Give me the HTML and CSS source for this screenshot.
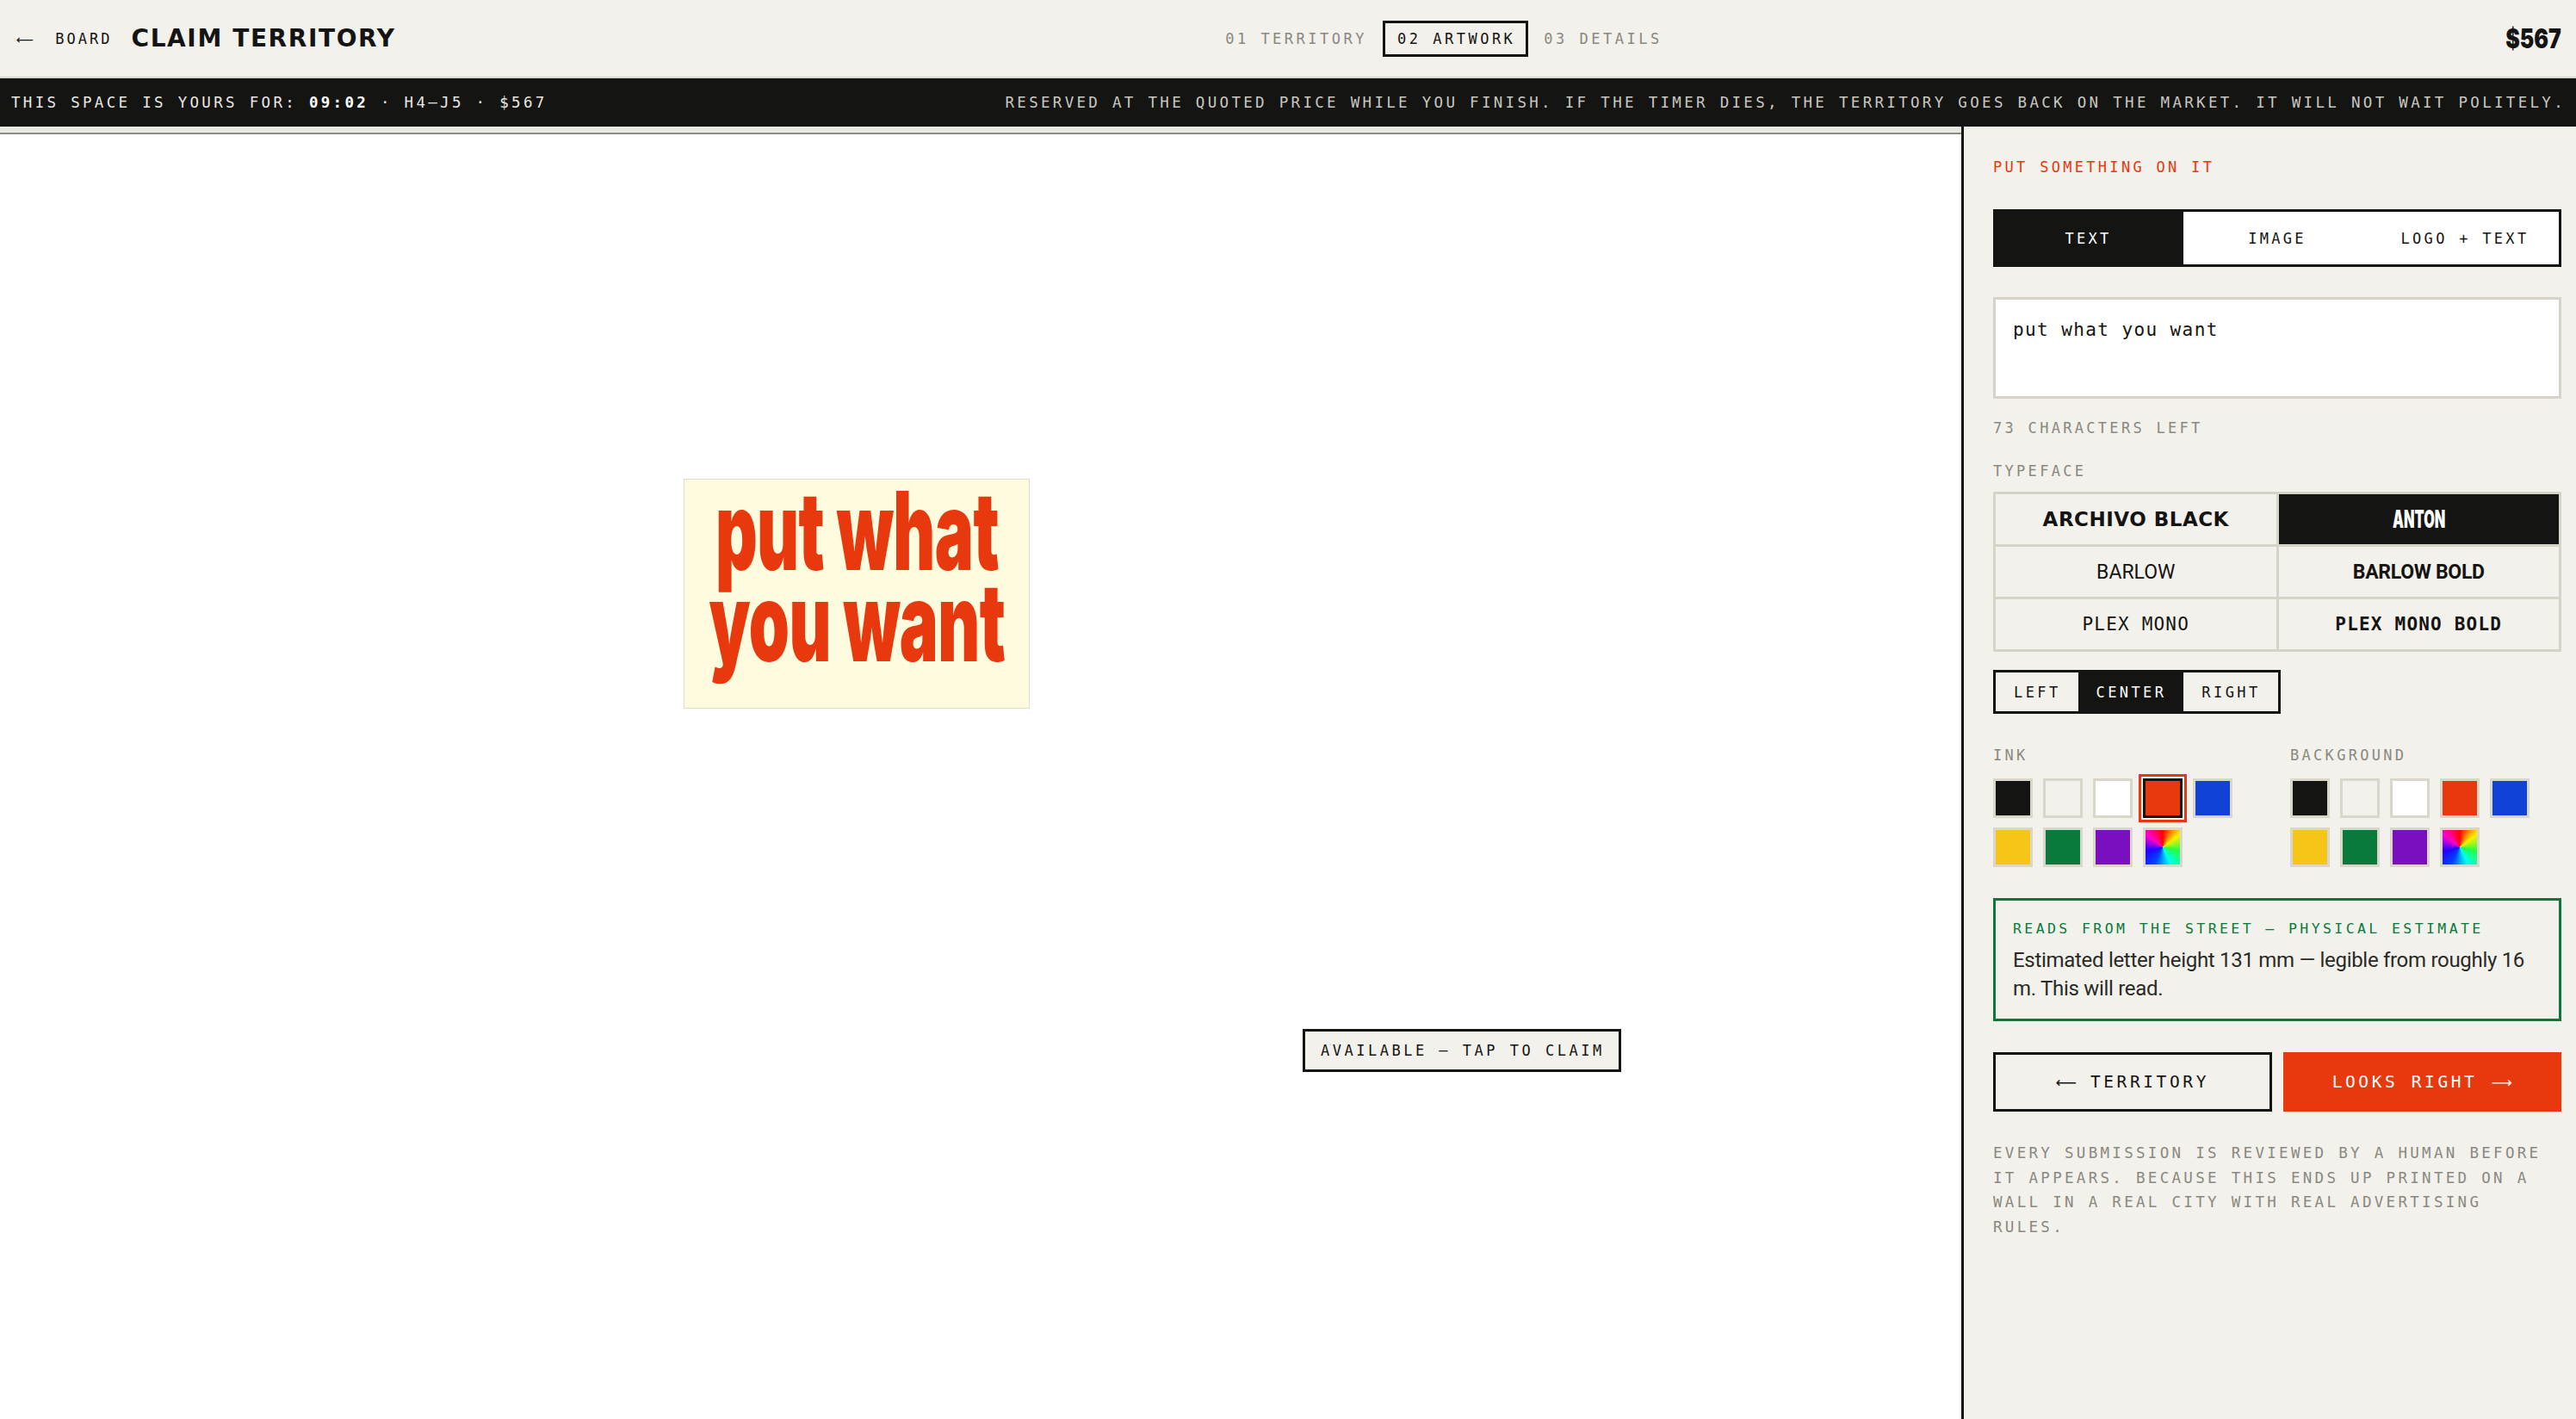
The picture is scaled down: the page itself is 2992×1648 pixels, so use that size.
FILE: index.html
```html
<!DOCTYPE html>
<html lang="en">
<head>
  <meta charset="UTF-8">
  <title>Claim territory</title>
  <link rel="stylesheet" href="styles.css">
</head>
<body>
  <!-- top bar -->
  <header class="top">
    <div class="top-left">
      <span class="back"><span class="arrow">⟵</span> BOARD</span>
      <h1 class="title">CLAIM TERRITORY</h1>
    </div>
    <nav class="steps">
      <span class="step">01 TERRITORY</span>
      <span class="step current">02 ARTWORK</span>
      <span class="step">03 DETAILS</span>
    </nav>
    <div class="price"><span>$567</span></div>
  </header>

  <!-- timer strip -->
  <div class="timer">
    <span>THIS SPACE IS YOURS FOR: <b>09:02</b> · H4–J5 · $567</span>
    <span>RESERVED AT THE QUOTED PRICE WHILE YOU FINISH. IF THE TIMER DIES, THE TERRITORY GOES BACK ON THE MARKET. IT WILL NOT WAIT POLITELY.</span>
  </div>

  <main class="main">
    <!-- wall preview -->
    <section class="canvas">
      <div class="ruler"></div>
      <div class="stage">
        <div class="sign">
          <div class="sign-text">
            <span class="sign-line">put what</span>
            <span class="sign-line">you want</span>
          </div>
        </div>
        <div class="claim-tag">AVAILABLE — TAP TO CLAIM</div>
      </div>
    </section>

    <!-- editor panel -->
    <aside class="panel">
      <div class="kicker">PUT SOMETHING ON IT</div>

      <div class="tabs">
        <span class="tab active">TEXT</span>
        <span class="tab">IMAGE</span>
        <span class="tab">LOGO + TEXT</span>
      </div>

      <textarea class="input">put what you want</textarea>
      <div class="label count">73 CHARACTERS LEFT</div>

      <div class="label face-label">TYPEFACE</div>
      <div class="faces">
        <span class="face f-archivo">ARCHIVO BLACK</span>
        <span class="face f-anton active"><span>ANTON</span></span>
        <span class="face f-barlow">BARLOW</span>
        <span class="face f-barlow-bold">BARLOW BOLD</span>
        <span class="face f-mono">PLEX MONO</span>
        <span class="face f-mono-bold">PLEX MONO BOLD</span>
      </div>

      <div class="align">
        <span class="align-btn">LEFT</span>
        <span class="align-btn active">CENTER</span>
        <span class="align-btn">RIGHT</span>
      </div>

      <div class="colors">
        <div class="color-group">
          <div class="label">INK</div>
          <div class="swatches">
            <span class="sw c-black"></span>
            <span class="sw c-paper"></span>
            <span class="sw c-white"></span>
            <span class="sw c-red selected"></span>
            <span class="sw c-blue"></span>
            <span class="sw c-yellow"></span>
            <span class="sw c-green"></span>
            <span class="sw c-purple"></span>
            <span class="sw c-any"></span>
          </div>
        </div>
        <div class="color-group">
          <div class="label">BACKGROUND</div>
          <div class="swatches">
            <span class="sw c-black"></span>
            <span class="sw c-paper"></span>
            <span class="sw c-white"></span>
            <span class="sw c-red"></span>
            <span class="sw c-blue"></span>
            <span class="sw c-yellow"></span>
            <span class="sw c-green"></span>
            <span class="sw c-purple"></span>
            <span class="sw c-any"></span>
          </div>
        </div>
      </div>

      <div class="estimate">
        <div class="estimate-title">READS FROM THE STREET — PHYSICAL ESTIMATE</div>
        <p class="estimate-text">Estimated letter height 131 mm — legible from roughly 16 m. This will read.</p>
      </div>

      <div class="actions">
        <span class="btn btn-back"><span class="arrow">⟵</span> TERRITORY</span>
        <span class="btn btn-next">LOOKS RIGHT <span class="arrow">⟶</span></span>
      </div>

      <p class="note">EVERY SUBMISSION IS REVIEWED BY A HUMAN BEFORE IT APPEARS. BECAUSE THIS ENDS UP PRINTED ON A WALL IN A REAL CITY WITH REAL ADVERTISING RULES.</p>
    </aside>
  </main>
</body>
</html>
```

FILE: styles.css
```css
/* base */
html, body {
  margin: 0;
  height: 100%;
}
body {
  font-family: "DejaVu Sans Mono", "Liberation Mono", monospace;
  color: #141412;
  background: #f3f1ec;
  display: flex;
  flex-direction: column;
  overflow: hidden;
}
.arrow {
  font-family: "DejaVu Sans", sans-serif;
  letter-spacing: 0;
}

/* top bar */
.top {
  height: 89px;
  border-bottom: 2px solid #d8d6ce;
  display: flex;
  align-items: center;
  justify-content: space-between;
  padding: 0 17px 0 19px;
  flex-shrink: 0;
}
.top-left {
  display: flex;
  align-items: center;
  gap: 22px;
}
.back {
  font-size: 17px;
  letter-spacing: 3px;
}
.back .arrow {
  font-size: 14px;
  margin-right: 12px;
}
.title {
  margin: 0;
  font-family: "DejaVu Sans", "Liberation Sans", sans-serif;
  font-weight: 700;
  font-size: 28px;
  letter-spacing: 1.6px;
}
.steps {
  display: flex;
  align-items: center;
  gap: 18px;
}
.step {
  font-size: 17px;
  letter-spacing: 3.5px;
  color: #8a887f;
}
.step.current {
  color: #141412;
  border: 3px solid #141412;
  padding: 8px 12px 8px 14px;
}
.price span {
  display: inline-block;
  font-family: "Inter", "Liberation Sans", sans-serif;
  font-weight: 900;
  font-size: 31px;
  transform: scaleX(0.8);
  transform-origin: right center;
}

/* timer strip */
.timer {
  height: 56px;
  background: #141412;
  color: #e9e7e1;
  display: flex;
  align-items: center;
  justify-content: space-between;
  padding: 0 12px 0 13px;
  font-size: 17.5px;
  letter-spacing: 3.3px;
  white-space: nowrap;
  flex-shrink: 0;
}
.timer span:last-child {
  color: #c9c7c0;
}
.timer b {
  color: #fff;
}

/* main area */
.main {
  flex: 1;
  display: flex;
  min-height: 0;
}
.canvas {
  flex: 1;
  background: #fff;
  display: flex;
  flex-direction: column;
}
.ruler {
  height: 7px;
  background: #e9e7e1;
  border-bottom: 2px solid #8c8b86;
}
.stage {
  flex: 1;
  position: relative;
}
.sign {
  position: absolute;
  left: 794px;
  top: 400px;
  width: 400px;
  height: 265px;
  background: #fefbdf;
  border: 1px solid #dedcd0;
  display: flex;
  align-items: center;
  justify-content: center;
}
.sign-text {
  font-family: "Inter", "Liberation Sans", sans-serif;
  font-weight: 900;
  font-size: 126px;
  letter-spacing: -1px;
  color: #e8380d;
  text-align: center;
  white-space: nowrap;
  transform: scaleX(0.6);
  margin-top: -42px;
}
.sign-line {
  display: block;
  height: 106px;
  line-height: 106px;
}
.claim-tag {
  position: absolute;
  left: 1513px;
  top: 1039px;
  border: 3px solid #141412;
  background: #f3f1ec;
  padding: 0 16px 0 18px;
  height: 44px;
  line-height: 44px;
  font-size: 17px;
  letter-spacing: 3.5px;
}

/* panel */
.panel {
  width: 660px;
  border-left: 3px solid #141412;
  padding: 35px 17px 0 34px;
  background: #f3f1ec;
}
.kicker {
  color: #e8380d;
  font-size: 17px;
  line-height: 24px;
  letter-spacing: 3.3px;
}
.label {
  color: #8a887f;
  font-size: 17px;
  line-height: 24px;
  letter-spacing: 3.3px;
}
.tabs {
  margin-top: 37px;
  display: grid;
  grid-template-columns: 1fr 1fr 1fr;
  border: 3px solid #141412;
  background: #fff;
  height: 67px;
  box-sizing: border-box;
}
.tab {
  display: flex;
  align-items: center;
  justify-content: center;
  font-size: 17px;
  letter-spacing: 3.3px;
}
.tab.active {
  background: #141412;
  color: #fff;
  margin: -3px 0 -3px -3px;
}
.input {
  display: block;
  margin-top: 35px;
  width: 100%;
  height: 118px;
  box-sizing: border-box;
  border: 3px solid #d6d4c8;
  background: #fff;
  padding: 20px 20px;
  font-family: "DejaVu Sans Mono", monospace;
  font-size: 21px;
  line-height: 30px;
  letter-spacing: 1.4px;
  color: #141412;
  resize: none;
}
.count {
  margin-top: 22px;
}
.face-label {
  margin-top: 26px;
}
.faces {
  margin-top: 12px;
  display: grid;
  grid-template-columns: 1fr 1fr;
  gap: 3px;
  padding: 3px;
  background: #d6d4c8;
}
.face {
  height: 58px;
  display: flex;
  align-items: center;
  justify-content: center;
  background: #f3f1ec;
}
.face.active {
  background: #141412;
  color: #fff;
}
.f-archivo {
  font-family: "DejaVu Sans", "Liberation Sans", sans-serif;
  font-weight: 700;
  font-size: 23px;
  letter-spacing: 0.5px;
}
.f-anton span {
  display: inline-block;
  font-family: "Inter", "Liberation Sans", sans-serif;
  font-weight: 900;
  font-size: 28px;
  transform: scaleX(0.58);
}
.f-barlow {
  font-family: "Roboto", "Liberation Sans", sans-serif;
  font-weight: 400;
  font-size: 23px;
}
.f-barlow-bold {
  font-family: "Roboto", "Liberation Sans", sans-serif;
  font-weight: 700;
  font-size: 23px;
  letter-spacing: -0.3px;
}
.f-mono, .f-mono-bold {
  font-size: 21px;
  letter-spacing: 1.2px;
}
.f-mono-bold {
  font-weight: 700;
}
.align {
  margin-top: 21px;
  display: inline-flex;
  border: 3px solid #141412;
  height: 51px;
  box-sizing: border-box;
}
.align-btn {
  display: flex;
  align-items: center;
  padding: 0 20px 0 21px;
  font-size: 17px;
  letter-spacing: 3.4px;
}
.align-btn.active {
  background: #141412;
  color: #fff;
}
.colors {
  margin-top: 36px;
  display: flex;
  gap: 67px;
}
.swatches {
  margin-top: 15px;
  display: grid;
  grid-template-columns: repeat(5, 46px);
  gap: 11px 12px;
}
.sw {
  width: 46px;
  height: 46px;
  box-sizing: border-box;
  border: 3px solid #d9d6ca;
}
.sw.selected {
  border-color: #141412;
  box-shadow: 0 0 0 2px #fff, 0 0 0 5px #e8380d;
}
.c-black { background: #141412; }
.c-paper { background: #f3f1ec; }
.c-white { background: #fff; }
.c-red { background: #e8380d; }
.c-blue { background: #1042d6; }
.c-yellow { background: #f5c518; }
.c-green { background: #0a7a3c; }
.c-purple { background: #7a0fc0; }
.c-any {
  background: conic-gradient(#ff0000, #ffee00, #22ff44, #00ffee, #0044ff, #2200ff, #ff00cc, #ff0000);
}
.estimate {
  margin-top: 36px;
  border: 3px solid #0a7a3c;
  padding: 21px 20px 18px;
}
.estimate-title {
  color: #0a7a3c;
  font-size: 16.5px;
  line-height: 24px;
  letter-spacing: 3.4px;
}
.estimate-text {
  margin: 8px 0 0;
  font-family: "Roboto", "Liberation Sans", sans-serif;
  font-size: 24px;
  line-height: 33px;
  letter-spacing: -0.3px;
  color: #2a2a27;
}
.actions {
  margin-top: 36px;
  display: grid;
  grid-template-columns: 1fr 1fr;
  gap: 13px;
}
.btn {
  height: 69px;
  box-sizing: border-box;
  display: flex;
  align-items: center;
  justify-content: center;
  gap: 16px;
  font-size: 19.5px;
  letter-spacing: 3.6px;
}
.btn .arrow {
  font-size: 17px;
}
.btn-back {
  border: 3px solid #141412;
}
.btn-next {
  background: #e8380d;
  color: #fff;
}
.note {
  margin: 34px 0 0;
  color: #8a887f;
  font-size: 17.5px;
  line-height: 28.6px;
  letter-spacing: 3.3px;
}
```
